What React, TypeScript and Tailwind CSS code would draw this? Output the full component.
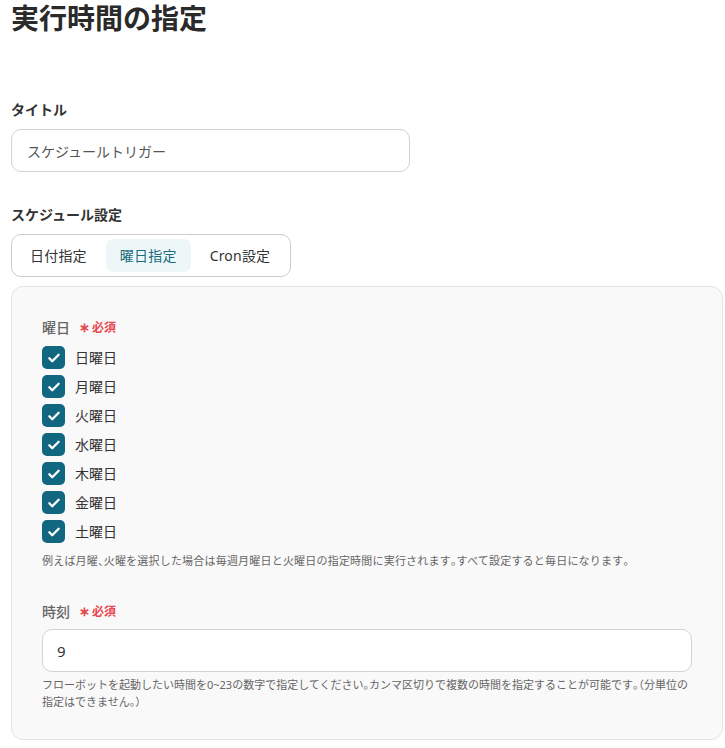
import React, { useState } from "react";

const days = ["日曜日", "月曜日", "火曜日", "水曜日", "木曜日", "金曜日", "土曜日"];
const tabs = ["日付指定", "曜日指定", "Cron設定"];

// half-width punctuation, as in the reference
const P: React.FC<{ c: string }> = ({ c }) => <span className="[font-feature-settings:'halt']">{c}</span>;

const Required = () => (
  <span className="ml-[9px] text-[12px] font-bold text-[#e8474f]">
    <span className="mr-[2px] text-[13px]">∗</span>必須
  </span>
);

const CheckBox: React.FC<{ checked: boolean; onClick: () => void }> = ({ checked, onClick }) => (
  <button
    onClick={onClick}
    className={`flex h-[23px] w-[23px] items-center justify-center rounded-[5px] ${
      checked ? "bg-[#10677f]" : "border border-[#bbb] bg-white"
    }`}
  >
    {checked && (
      <svg width="14" height="14" viewBox="0 0 24 24" fill="none" stroke="white" strokeWidth="4" strokeLinecap="round" strokeLinejoin="round">
        <path d="M4 12.5l5 5L20 6.5" />
      </svg>
    )}
  </button>
);

export default function App() {
  const [tab, setTab] = useState(1);
  const [checked, setChecked] = useState<boolean[]>(days.map(() => true));
  const [title, setTitle] = useState("スケジュールトリガー");
  const [hour, setHour] = useState("9");

  return (
    <div className="min-h-[748px] bg-white pl-[11px] pr-[2px] text-[#333]" style={{ fontFamily: '"Noto Sans", "Noto Sans CJK JP", sans-serif' }}>
      <h1 className="text-[28px] font-bold leading-[36px] text-[#2a2a2a]">実行時間の指定</h1>

      <div className="mt-[64px] text-[14px] font-bold leading-[20px]">タイトル</div>
      <input
        value={title}
        onChange={(e) => setTitle(e.target.value)}
        className="mt-[9px] block h-[43px] w-[399px] rounded-[10px] border border-[#d0d3d8] bg-white px-[15px] text-[14px] text-[#555] outline-none"
      />

      <div className="mt-[33px] text-[14px] font-bold leading-[20px]">スケジュール設定</div>
      <div className="mt-[9px] flex w-[280px] gap-[5px] rounded-[10px] border border-[#ccc] bg-white p-[4px]">
        {tabs.map((t, i) => (
          <button
            key={t}
            onClick={() => setTab(i)}
            className={`h-[33px] rounded-[7px] px-[14px] text-[14px] tracking-[0.2px] ${
              tab === i ? "bg-[#eef7f8] text-[#1b6b7f]" : "text-[#333]"
            }`}
          >
            {t}
          </button>
        ))}
      </div>

      <div className="mt-[9px] rounded-[12px] border border-[#e4e4e4] bg-[#f9f9f9] px-[30px] pb-[29px] pt-[30px]">
        <div className="flex items-center text-[14px] font-medium leading-[20px] text-[#666]">
          曜日
          <Required />
        </div>
        <div className="mt-[8px] flex flex-col gap-[6px]">
          {days.map((d, i) => (
            <div key={d} className="flex items-center gap-[10px]">
              <CheckBox
                checked={checked[i]}
                onClick={() => setChecked(checked.map((c, j) => (j === i ? !c : c)))}
              />
              <span className="text-[14px] text-[#333]">{d}</span>
            </div>
          ))}
        </div>
        <p className="mt-[9px] text-[11px] leading-[17px] tracking-[0.2px] text-[#666]">
          例えば月曜<P c="、" />火曜を選択した場合は毎週月曜日と火曜日の指定時間に実行されます<P c="。" />すべて設定すると毎日になります<P c="。" />
        </p>

        <div className="mt-[32px] flex items-center text-[14px] font-medium leading-[20px] text-[#666]">
          時刻
          <Required />
        </div>
        <input
          value={hour}
          onChange={(e) => setHour(e.target.value)}
          className="mt-[7px] block h-[43px] w-full rounded-[10px] border border-[#d0d3d8] bg-white px-[14px] text-[15px] text-[#333] outline-none"
        />
        <p className="mt-[4px] text-[11px] leading-[17px] text-[#666]">
          フローボットを起動したい時間を0~23の数字で指定してください<P c="。" />カンマ区切りで複数の時間を指定することが可能です<P c="。" />
          <P c="（" />分単位の指定はできません<P c="。" /><P c="）" />
        </p>
      </div>
    </div>
  );
}
